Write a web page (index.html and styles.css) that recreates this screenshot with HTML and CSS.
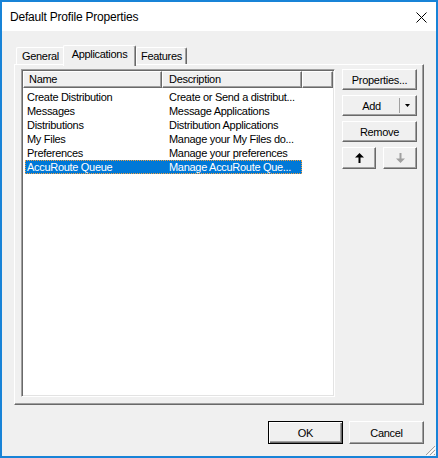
FILE: index.html
```html
<!DOCTYPE html>
<html>
<head>
<meta charset="utf-8">
<title>Default Profile Properties</title>
<link rel="stylesheet" href="styles.css">
</head>
<body>
<div class="window">
  <div class="titlebar">
    <span class="title">Default Profile Properties</span>
    <svg class="close" width="11" height="11" viewBox="0 0 11 11"><path d="M0.5 0.5 L10.5 10.5 M10.5 0.5 L0.5 10.5" stroke="#000" stroke-width="1" fill="none"/></svg>
  </div>
  <div class="client">
    <div class="tabs">
      <div class="tab tab-general">General</div>
      <div class="tab tab-active">Applications</div>
      <div class="tab tab-features">Features</div>
    </div>
    <div class="panel">
      <div class="listview">
        <div class="header">
          <div class="hcell hname">Name</div>
          <div class="hcell hdesc">Description</div>
          <div class="hcell hrest"></div>
        </div>
        <div class="rows">
          <div class="row"><span class="cname">Create Distribution</span><span class="cdesc">Create or Send a distribut...</span></div>
          <div class="row"><span class="cname">Messages</span><span class="cdesc">Message Applications</span></div>
          <div class="row"><span class="cname">Distributions</span><span class="cdesc">Distribution Applications</span></div>
          <div class="row"><span class="cname">My Files</span><span class="cdesc">Manage your My Files do...</span></div>
          <div class="row"><span class="cname">Preferences</span><span class="cdesc">Manage your preferences</span></div>
          <div class="row selected"><span class="cname">AccuRoute Queue</span><span class="cdesc">Manage AccuRoute Que...</span></div>
        </div>
      </div>
      <div class="buttons">
        <div class="btn">Properties...</div>
        <div class="btn split">
          <span class="split-label">Add</span>
          <span class="split-arrow"><svg width="5" height="3" viewBox="0 0 5 3"><path d="M0 0 H5 L2.5 3 Z" fill="#000"/></svg></span>
        </div>
        <div class="btn">Remove</div>
        <div class="arrows">
          <div class="btn arrow-btn"><svg width="9" height="10" viewBox="0 0 9 10"><path d="M4.5 0 L9 4.5 L5.5 4.5 L5.5 10 L3.5 10 L3.5 4.5 L0 4.5 Z" fill="#000"/></svg></div>
          <div class="btn arrow-btn"><svg width="9" height="10" viewBox="0 0 9 10"><path d="M4.5 10 L9 5.5 L5.5 5.5 L5.5 0 L3.5 0 L3.5 5.5 L0 5.5 Z" fill="#a0a0a0"/></svg></div>
        </div>
      </div>
    </div>
    <div class="footer">
      <div class="btn fbtn default">OK</div>
      <div class="btn fbtn">Cancel</div>
    </div>
  </div>
  <svg class="grip" width="12" height="12" viewBox="0 0 12 12">
    <path d="M11 2 L2 11 M11 6 L6 11 M11 10 L10 11" stroke="#a0a0a0" stroke-width="1" fill="none"/>
    <path d="M12 3 L3 12 M12 7 L7 12" stroke="#ffffff" stroke-width="1" fill="none"/>
  </svg>
</div>
</body>
</html>
```
FILE: styles.css
```css
* { box-sizing: border-box; }
html, body { margin: 0; padding: 0; }
body {
  width: 438px;
  height: 458px;
  overflow: hidden;
  font-family: "Liberation Sans", Arial, sans-serif;
  font-size: 11px;
  letter-spacing: -0.3px;
  color: #000;
  background: #f0f0f0;
}
.window {
  position: relative;
  width: 438px;
  height: 458px;
  border: 2px solid #1883d7;
  background: #f0f0f0;
  display: flex;
  flex-direction: column;
}
.titlebar {
  height: 29px;
  flex: none;
  background: #fff;
  display: flex;
  align-items: center;
  justify-content: space-between;
  padding: 0 9px 0 8px;
}
.title {
  font-size: 12px;
  letter-spacing: -0.2px;
}
.close { display: block; margin-top: 1px; }
.client {
  flex: 1;
  display: flex;
  flex-direction: column;
  padding: 14px 12px 0 12px;
}
.tabs {
  position: relative;
  z-index: 1;
  display: flex;
  height: 20px;
  padding-left: 2px;
}
.tab {
  height: 17px;
  margin-top: 2px;
  line-height: 16px;
  text-align: center;
  background: #f0f0f0;
  border-top: 1px solid #fff;
  border-left: 1px solid #fff;
  border-right: 1px solid #696969;
  box-shadow: inset -1px 0 #a0a0a0;
  border-top-left-radius: 2px;
  border-top-right-radius: 2px;
}
.tab-general {
  width: 48px;
  border-right: none;
  box-shadow: none;
}
.tab-features { width: 51px; }
.tab-active {
  width: 73px;
  height: 21px;
  margin-top: 0;
  margin-left: -1px;
  line-height: 16px;
}
.panel {
  height: 341px;
  margin-top: -1px;
  border-top: 1px solid #fff;
  border-left: 1px solid #fff;
  border-right: 1px solid #696969;
  border-bottom: 1px solid #696969;
  box-shadow: inset -1px -1px #a0a0a0;
  padding: 4px 0 0 6px;
  display: flex;
  gap: 7px;
}
.listview {
  width: 314px;
  height: 328px;
  flex: none;
  background: #fff;
  border-top: 1px solid #a0a0a0;
  border-left: 1px solid #a0a0a0;
  border-right: 1px solid #fff;
  border-bottom: 1px solid #fff;
  box-shadow: inset 1px 1px #696969, inset -1px -1px #e3e3e3;
  padding: 1px;
}
.header {
  display: flex;
  height: 17px;
}
.hcell {
  height: 17px;
  line-height: 15px;
  background: #f0f0f0;
  border-top: 1px solid #fff;
  border-left: 1px solid #fff;
  border-right: 1px solid #696969;
  border-bottom: 1px solid #696969;
  box-shadow: inset -1px -1px #a0a0a0;
  padding-left: 5px;
  white-space: nowrap;
}
.hname { width: 139px; }
.hdesc { width: 140px; padding-left: 6px; }
.hrest { flex: 1; }
.rows {
  padding-top: 2px;
  padding-left: 2px;
}
.row {
  display: flex;
  width: 277px;
  height: 14px;
  line-height: 14px;
  white-space: nowrap;
}
.cname {
  width: 137px;
  padding-left: 2px;
  flex: none;
}
.cdesc {
  padding-left: 7px;
}
.row.selected {
  background: #0078d7;
  color: #fff;
  outline: 1px dotted #f0a040;
  outline-offset: -1px;
}
.buttons {
  width: 75px;
  display: flex;
  flex-direction: column;
  gap: 5px;
}
.btn {
  height: 21px;
  display: flex;
  align-items: center;
  justify-content: center;
  background: #f0f0f0;
  border-top: 1px solid #fff;
  border-left: 1px solid #fff;
  border-right: 1px solid #696969;
  border-bottom: 1px solid #696969;
  box-shadow: inset -1px -1px #a0a0a0;
  white-space: nowrap;
}
.split {
  justify-content: flex-start;
  padding: 0;
}
.split-label {
  flex: 1;
  text-align: center;
  padding-left: 1px;
}
.split-arrow {
  width: 16px;
  height: 15px;
  margin-right: 1px;
  border-left: 1px solid #a0a0a0;
  display: flex;
  align-items: center;
  justify-content: center;
}
.split-arrow svg { display: block; }
.arrows {
  display: flex;
  justify-content: space-between;
}
.arrow-btn {
  width: 34px;
  height: 22px;
}
.arrow-btn svg { display: block; }
.footer {
  margin-top: 16px;
  display: flex;
  justify-content: flex-end;
  gap: 6px;
}
.fbtn {
  width: 75px;
  height: 23px;
}
.default {
  border: 1px solid #000;
  box-shadow: inset 1px 1px #fff, inset -1px -1px #696969, inset -2px -2px #a0a0a0;
}
.grip {
  position: absolute;
  right: 0;
  bottom: 0;
}
```
